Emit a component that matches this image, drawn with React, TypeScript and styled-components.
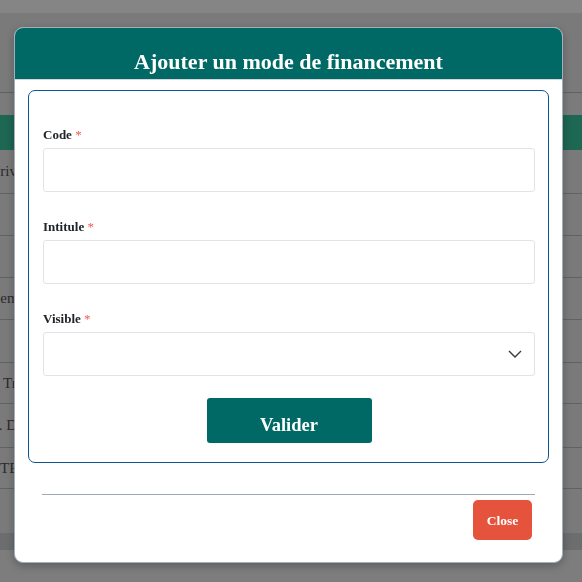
import React from "react";
import styled, { createGlobalStyle } from "styled-components";

const Global = createGlobalStyle`
  html, body { margin: 0; padding: 0; }
  body {
    background: #7b7b7b;
    font-family: "Liberation Serif", "Times New Roman", serif;
    overflow: hidden;
  }
  * { box-sizing: border-box; }
`;

/* ---------- page behind the dialog (already dimmed by the backdrop) ---------- */
const Page = styled.div`
  width: 582px;
  height: 582px;
  display: flex;
  flex-direction: column;
  background: #7b7b7b;
  overflow: hidden;
  & > * { flex-shrink: 0; }
`;

const TopBar = styled.div`
  height: 13px;
  background: #858585;
`;

const NavBar = styled.div`
  height: 80px;
  background: #7a7a7a;
  border-bottom: 1px solid #5f6368;
`;

const Spacer = styled.div<{ $h: number; $bg: string }>`
  height: ${(p) => p.$h}px;
  background: ${(p) => p.$bg};
`;

const TableHead = styled.div`
  height: 35px;
  background: #1d6753;
`;

const Row = styled.div<{ $h: number }>`
  height: ${(p) => p.$h}px;
  display: flex;
  align-items: center;
  border-bottom: 1px solid #5f6368;
  background: #7a7a7b;
`;

const Cell = styled.span<{ $shift: number }>`
  margin-left: ${(p) => p.$shift}px;
  font-size: 15px;
  color: #2a2a2a;
  white-space: nowrap;
`;

const rows = [
  { h: 44, text: "Privé", shift: -8 },
  { h: 42, text: "", shift: 0 },
  { h: 42, text: "", shift: 0 },
  { h: 42, text: "Semestriel", shift: -8 },
  { h: 43, text: "", shift: 0 },
  { h: 41, text: "Trésor", shift: 3 },
  { h: 44, text: "P. Dupont", shift: -8 },
  { h: 41, text: "TEXTE", shift: 0 },
];

/* ---------- dialog ---------- */
const Modal = styled.div`
  position: fixed;
  left: 14px;
  top: 27px;
  width: 549px;
  background: #ffffff;
  border: 1px solid #a3afbd;
  border-radius: 9px;
  box-shadow: 0 3px 8px rgba(0, 0, 0, 0.25);
  display: flex;
  flex-direction: column;
  overflow: hidden;
`;

const Header = styled.div`
  background: #006865;
  padding: 22px 16px 5px;
  border-bottom: 1px solid #d4d8dc;
  display: flex;
  justify-content: center;
`;

const Title = styled.h2`
  margin: 0;
  font-size: 22px;
  line-height: 24px;
  font-weight: 700;
  color: #ffffff;
`;

const Body = styled.div`
  padding: 10px 13px 0 13px;
`;

const FormBox = styled.form`
  border: 1px solid #0d5590;
  border-radius: 7px;
  padding: 34px 13px 19px 14px;
  display: flex;
  flex-direction: column;
  gap: 25px;
`;

const Field = styled.div`
  display: flex;
  flex-direction: column;
`;

const Label = styled.label`
  font-size: 13px;
  line-height: 20px;
  font-weight: 700;
  color: #212529;
  margin-bottom: 3px;
`;

const Req = styled.span`
  color: #ef5b4f;
  font-weight: 400;
`;

const TextInput = styled.input`
  height: 44px;
  width: 100%;
  border: 1px solid #e0e3e7;
  border-radius: 3px;
  padding: 0 12px;
  font-family: inherit;
  font-size: 14px;
  outline: none;
  background: #fff;
`;

const SelectWrap = styled.div`
  position: relative;
`;

const Select = styled.select`
  height: 44px;
  width: 100%;
  border: 1px solid #e0e3e7;
  border-radius: 3px;
  padding: 0 12px;
  font-family: inherit;
  font-size: 14px;
  background: #fff;
  appearance: none;
  -webkit-appearance: none;
  outline: none;
`;

const Chevron = styled.svg`
  position: absolute;
  right: 13px;
  top: 18px;
  pointer-events: none;
`;

const Actions = styled.div`
  display: flex;
  justify-content: center;
  margin-top: -3px;
`;

const SubmitButton = styled.button`
  width: 165px;
  height: 45px;
  padding: 15px 0 6px;
  border: none;
  border-radius: 3px;
  background: #006865;
  color: #ffffff;
  font-family: inherit;
  font-size: 18.5px;
  line-height: 24px;
  font-weight: 700;
  cursor: pointer;
`;

const Footer = styled.div`
  margin: 31px 27px 0;
  border-top: 1px solid #9ea8b6;
  padding: 5px 3px 22px;
  display: flex;
  justify-content: flex-end;
`;

const CloseButton = styled.button`
  width: 59px;
  height: 40px;
  border: none;
  border-radius: 5px;
  background: #e5533d;
  color: #ffffff;
  font-family: inherit;
  font-size: 13.5px;
  font-weight: 700;
  padding: 2px 0 0;
  cursor: pointer;
`;

export default function App() {
  return (
    <>
      <Global />
      <Page>
        <TopBar />
        <NavBar />
        <Spacer $h={22} $bg="#7b7b7b" />
        <TableHead />
        {rows.map((r, i) => (
          <Row key={i} $h={r.h}>
            {r.text && <Cell $shift={r.shift}>{r.text}</Cell>}
          </Row>
        ))}
        <Spacer $h={44} $bg="#7a7a7a" />
        <Spacer $h={17} $bg="#6c6d6f" />
        <Spacer $h={40} $bg="#7d7d7d" />
      </Page>

      <Modal role="dialog">
        <Header>
          <Title>Ajouter un mode de financement</Title>
        </Header>
        <Body>
          <FormBox onSubmit={(e) => e.preventDefault()}>
            <Field>
              <Label>
                Code <Req>*</Req>
              </Label>
              <TextInput type="text" />
            </Field>
            <Field>
              <Label>
                Intitule <Req>*</Req>
              </Label>
              <TextInput type="text" />
            </Field>
            <Field>
              <Label>
                Visible <Req>*</Req>
              </Label>
              <SelectWrap>
                <Select defaultValue="">
                  <option value=""></option>
                  <option value="oui">Oui</option>
                  <option value="non">Non</option>
                </Select>
                <Chevron width="14" height="8" viewBox="0 0 14 8" fill="none">
                  <path d="M1 1l6 6 6-6" stroke="#343a40" strokeWidth="1.4" />
                </Chevron>
              </SelectWrap>
            </Field>
            <Actions>
              <SubmitButton type="submit">Valider</SubmitButton>
            </Actions>
          </FormBox>
        </Body>
        <Footer>
          <CloseButton type="button">Close</CloseButton>
        </Footer>
      </Modal>
    </>
  );
}
